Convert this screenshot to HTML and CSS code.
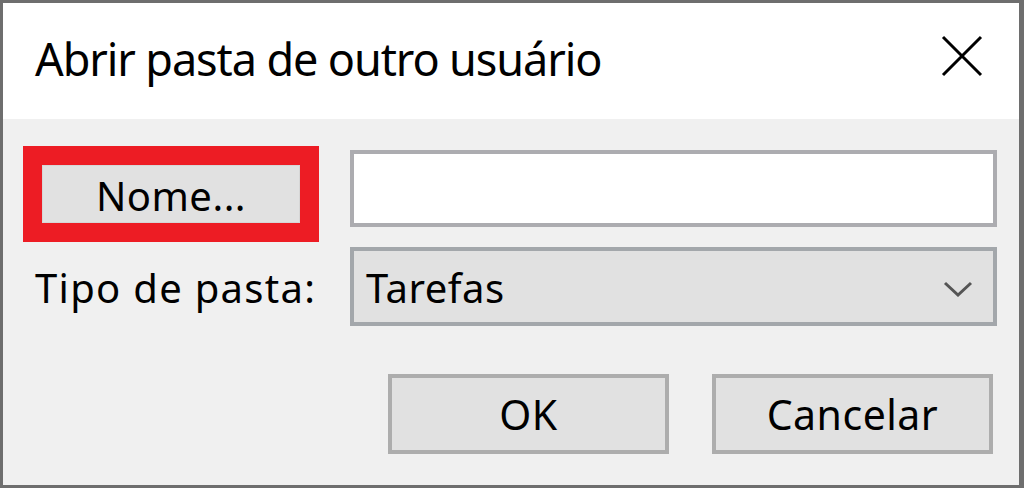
FILE: index.html
```html
<!DOCTYPE html>
<html lang="pt">
<head>
<meta charset="utf-8">
<title>Abrir pasta de outro usuário</title>
<link rel="stylesheet" href="styles.css">
</head>
<body>
<div class="dialog">
  <div class="titlebar">
    <span class="title">Abrir pasta de outro usuário</span>
    <span class="close" aria-label="Fechar">
      <svg width="42" height="42" viewBox="0 0 42 42"><path d="M2 2 L40 40 M40 2 L2 40" stroke="#000" stroke-width="3" fill="none"/></svg>
    </span>
  </div>
  <div class="content">
    <div class="row row-name">
      <div class="highlight"><button class="btn btn-name">Nome...</button></div>
      <div class="textbox"></div>
    </div>
    <div class="row row-type">
      <span class="label">Tipo de pasta:</span>
      <div class="select">
        <span class="select-value">Tarefas</span>
        <svg class="chevron" width="30" height="16" viewBox="0 0 30 16"><path d="M2 2 L15 14 L28 2" stroke="#555" stroke-width="3" fill="none"/></svg>
      </div>
    </div>
    <div class="actions">
      <button class="btn btn-action">OK</button>
      <button class="btn btn-action">Cancelar</button>
    </div>
  </div>
</div>
</body>
</html>
```

FILE: styles.css
```css
html, body {
  margin: 0;
  padding: 0;
}
body {
  font-family: "Noto Sans", "Open Sans", sans-serif;
  color: #000;
}
.dialog {
  width: 1024px;
  height: 488px;
  box-sizing: border-box;
  border-style: solid;
  border-color: #6e6e6e;
  border-width: 3px 5px 3px 3px;
  background: #f0f0f0;
  display: flex;
  flex-direction: column;
}
.titlebar {
  height: 116px;
  background: #fff;
  display: flex;
  align-items: center;
  justify-content: space-between;
  padding: 0 36px 0 32px;
  flex-shrink: 0;
}
.title {
  font-size: 45px;
  font-weight: 400;
  letter-spacing: -1.1px;
  margin-top: -5px;
}
.close {
  display: flex;
  margin-top: -10px;
}
.content {
  padding: 27px 22px 0 20px;
  display: flex;
  flex-direction: column;
}
.row {
  display: flex;
  align-items: flex-start;
}
.highlight {
  width: 296px;
  height: 96px;
  box-sizing: border-box;
  border: 19px solid #ed1c24;
  flex-shrink: 0;
}
.btn {
  font-family: inherit;
  color: #000;
  background: #e1e1e1;
  box-sizing: border-box;
  margin: 0;
  padding: 0;
  display: flex;
  align-items: center;
  justify-content: center;
}
.btn-name {
  width: 100%;
  height: 100%;
  border: 1px solid #d6d6d6;
  font-size: 40px;
  letter-spacing: 0.5px;
  padding-top: 2px;
}
.textbox {
  margin: 4px 0 0 31px;
  width: 647px;
  height: 77px;
  box-sizing: border-box;
  border: 4px solid #acacb0;
  background: #fff;
}
.row-type {
  margin-top: 5px;
  align-items: center;
}
.label {
  width: 296px;
  box-sizing: border-box;
  padding-left: 12px;
  font-size: 40px;
  letter-spacing: 1.3px;
  padding-top: 2px;
}
.select {
  margin-left: 31px;
  width: 647px;
  height: 79px;
  box-sizing: border-box;
  border: 4px solid #a3a7ab;
  background: #e1e1e1;
  display: flex;
  align-items: center;
  justify-content: space-between;
  padding: 0 20px 0 12px;
}
.select-value {
  font-size: 40px;
  letter-spacing: 0.5px;
  padding-top: 2px;
}
.chevron {
  margin-top: 4px;
}
.actions {
  margin-top: 48px;
  display: flex;
  justify-content: flex-end;
  gap: 43px;
  padding-right: 4px;
}
.btn-action {
  width: 281px;
  height: 80px;
  border: 4px solid #adadad;
  font-size: 41px;
  letter-spacing: 0.5px;
}
```
